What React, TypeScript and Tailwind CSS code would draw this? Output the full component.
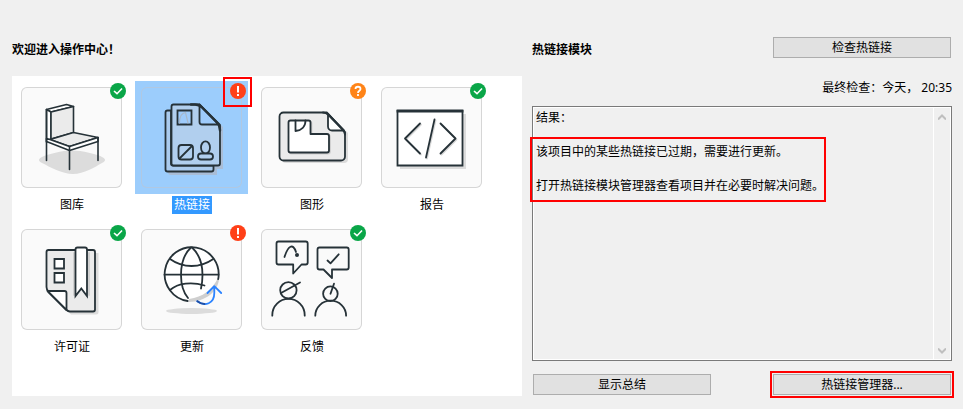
import type { ReactNode } from 'react'
import { useState } from 'react'

type Status = 'ok' | 'error' | 'question'

interface Module {
  id: string
  label: string
  status: Status
  icon: ReactNode
}

const INK = '#263238'

// All tile drawings share a 101 x 101 canvas, the size of the card.
const Drawing = ({ children }: { children: ReactNode }) => (
  <svg
    viewBox="0 0 101 101"
    className="block size-full"
    fill="none"
    stroke={INK}
    strokeWidth="1.8"
    strokeLinecap="round"
    strokeLinejoin="round"
    aria-hidden="true"
  >
    {children}
  </svg>
)

const ChairIcon = () => (
  <Drawing>
    <path
      d="M21 70c6-3 20-6.500 30-6.500s25 3.500 30 6.500c4 2 4 4 0 6-7 4-18 11-29 11S29 80 21 76c-4-2-4-4 0-6Z"
      fill="#dcdcdc"
      stroke="none"
    />
    <g strokeWidth="1.6">
      <path d="M25.500 22.500 45.500 17.500 52.500 19.500 30 25Z" fill="#fff" />
      <path d="M25.500 22.500 30 25V52L25.500 55Z" fill="#fff" />
      <path d="M30 25 52.500 19.500V45.500L30 52Z" fill="#ebebeb" />
      <path d="M29 52.500 52.500 45.500 77 50.500 48.500 59.500Z" fill="#ebebeb" />
      <path d="M25.500 51.500V54.500L48.500 63.500 77 54.500V50.500L48.500 59.500 29 52.500Z" fill="#fff" />
      <path d="M25.500 22.500V73.500M48.500 59.500V82.500M77 50.500V73.500" />
    </g>
  </Drawing>
)

const HotlinkIcon = () => (
  <Drawing>
    <path d="M27 26H34V20H62L82 40V82H76V88H30a3 3 0 0 1-3-3Z" fill="#a9bdd6" stroke="none" />
    <path
      d="M30 23.500H26.500a2 2 0 0 0-2 2V82.500a2 2 0 0 0 2 2H70.500a2 2 0 0 0 2-2V78.500H32a2 2 0 0 1-2-2Z"
      fill="#aacbee"
    />
    <path
      d="M32.500 17.500H58.500L79 38V76.500a2 2 0 0 1-2 2H32.500a2 2 0 0 1-2-2V19.500a2 2 0 0 1 2-2Z"
      fill="#b1cfee"
    />
    <path d="M58.500 17.500V35a2.500 2.500 0 0 0 2.500 2.500H77.500Z" fill="#9ecbfb" />
    <path d="M50 17.500h4c3 0 5 1 7 3L76 35.500c2 2 3 4 3 8" strokeWidth="2.400" />
    <path d="M36.500 23.500H50.500V37.500H36.500Z" fill="#9ecbfb" strokeLinejoin="miter" />
    <path d="M38.500 36c0-6 2-10 6-10.500l2.500 10.500" stroke="#a8b8ca" strokeWidth="1.200" />
    <rect x="37.500" y="58" width="14.500" height="14.500" rx="3" />
    <path d="M38.500 71.500 51 59" />
    <ellipse cx="64.500" cy="60.500" rx="4.500" ry="6.200" />
    <rect x="57" y="66.500" width="15" height="6" rx="3" fill="#b1cfee" />
  </Drawing>
)

const ShapeIcon = () => (
  <Drawing>
    <path d="M21 30H70L87 46V72a4 4 0 0 1-4 4H25a4 4 0 0 1-4-4Z" fill="#dcdcdc" stroke="none" />
    <path
      d="M22.500 25.500H66L84 45V69.500a4 4 0 0 1-4 4H22.500a4 4 0 0 1-4-4V29.500a4 4 0 0 1 4-4Z"
      fill="#ebebeb"
    />
    <path d="M67 27V39.500a4 4 0 0 0 4 4H83Z" fill="#fff" />
    <path d="M62 25.500c3 0 4 1 5.500 2.500L81.500 42.500c1.500 1.500 2.500 3 2.500 5" />
    <path
      d="M29.500 33.500H47.500a2 2 0 0 1 2 2V47H66a2 2 0 0 1 2 2V63.500a2 2 0 0 1-2 2H29.500a2 2 0 0 1-2-2V35.500a2 2 0 0 1 2-2Z"
      stroke="#cfcfcf"
      transform="translate(1 1)"
    />
    <path
      d="M29.500 33.500H47.500a2 2 0 0 1 2 2V47H66a2 2 0 0 1 2 2V63.500a2 2 0 0 1-2 2H29.500a2 2 0 0 1-2-2V35.500a2 2 0 0 1 2-2Z"
      fill="#fff"
    />
    <path d="M34.500 33.500V44C40.500 43.500 44.500 39.500 44.500 33.500" />
  </Drawing>
)

const ReportIcon = () => (
  <Drawing>
    <path d="M19 27H85V82H19Z" fill="#dcdcdc" stroke="none" />
    <g strokeLinejoin="miter">
      <path d="M16.500 24H81.500V78.500H16.500Z" fill="#fff" />
      <path d="M15.600 24H82.400" strokeWidth="2.800" strokeLinecap="butt" />
    </g>
    <path
      d="M39 36.500 24 51.500 39 66.500M59.500 36.500 74.500 51.500 59.500 66.500M53.500 32.500 45 70.500"
      stroke="#d8d8d8"
      transform="translate(1 1)"
    />
    <path d="M39 36.500 24 51.500 39 66.500M59.500 36.500 74.500 51.500 59.500 66.500M53.500 32.500 45 70.500" />
  </Drawing>
)

const LicenseIcon = () => (
  <Drawing>
    <path d="M28 24H77.500V83a2.500 2.500 0 0 1-2.500 2.500H50L28 64Z" fill="#dcdcdc" stroke="none" />
    <path
      d="M27.500 21H72a2 2 0 0 1 2 2V80.500a2 2 0 0 1-2 2H49c-2 0-3-1-4-2L27.500 63c-1.500-2-2-3-2-5V23a2 2 0 0 1 2-2Z"
      fill="#ebebeb"
    />
    <path d="M26.500 62H43.500a2 2 0 0 1 2 2V81Z" fill="#fff" />
    <path
      d="M33.500 30H43V39.500H33.500ZM33.500 44H43V53.500H33.500Z"
      fill="#fff"
      strokeLinejoin="miter"
    />
    <path d="M53 24V66M68 24V66" stroke="#cfcfcf" />
    <path
      d="M54.500 20.500a2 2 0 0 1 2-2h7.500a2 2 0 0 1 2 2V67L60.300 59.500 54.500 67Z"
      fill="#fff"
      strokeLinejoin="miter"
    />
  </Drawing>
)

const UpdateIcon = () => (
  <Drawing>
    <ellipse cx="50.500" cy="82" rx="25.500" ry="3" fill="#dcdcdc" stroke="none" />
    <circle cx="50.500" cy="45.500" r="27" fill="#fff" stroke="none" />
    <path d="M77 49C71 61 62 68 48 70V73C64 73 78 62 78 49Z" fill="#cfcfcf" stroke="none" />
    <path d="M77.200 50.200A27 27 0 1 0 46.700 72" />
    <path d="M23.500 45.700H77.500" />
    <path d="M29 30c13 9.300 30 9.300 43.300 0M29 61c8-7 22-8.500 34.500-4.500" />
    <path d="M50 18.500C44 24 40 34 40 46C40 55 42 63 47 69" />
    <path d="M51 18.500C57 24 61.500 34 61.500 46C61.500 51 61 55 60 59.500" />
    <path d="M56.300 72.300C64 78 73.300 74.500 73.300 64V57.500M66.500 64 73.300 57.200 80.200 64" stroke="#2b83ff" />
    <path d="M56.300 72.300C58.500 74 61 75 63.500 75" stroke="#1f4fa5" />
  </Drawing>
)

const FeedbackIcon = () => (
  <Drawing>
    <path d="M17.500 12.500H44.700a2 2 0 0 1 2 2V33.500a2 2 0 0 1-2 2H40.500L32.200 44.500V35.500H17.500a2 2 0 0 1-2-2V14.500a2 2 0 0 1 2-2Z" />
    <path d="M23.500 28C27 17 32 13.500 35 23" />
    <circle cx="36" cy="26" r="2" fill={INK} stroke="none" />
    <path d="M58.500 18.500H85.700a2 2 0 0 1 2 2V38.500a2 2 0 0 1-2 2H71V49L62.500 40.500H58.500a2 2 0 0 1-2-2V20.500a2 2 0 0 1 2-2Z" />
    <path d="M66.500 31.500 69.500 34.300 77.700 25.300" />
    <circle cx="27.400" cy="61.300" r="8.200" />
    <path d="M20.500 63.700 39 53.500M11.300 86.700V86a16.200 16.200 0 0 1 32.400 0V86.700" />
    <circle cx="69.400" cy="64.700" r="7.300" />
    <path d="M69.500 64.700 73 54.700M54.300 86.700a15.400 15 0 0 1 30.800 0" />
  </Drawing>
)

const badgeFill: Record<Status, string> = {
  ok: '#0aa648',
  error: '#ff4018',
  question: '#ff8418',
}

const StatusBadge = ({ status }: { status: Status }) => (
  <svg
    viewBox="0 0 16 16"
    className="absolute top-[2px] right-[2px] size-4"
    fill="none"
    stroke="#fff"
    strokeWidth="2"
    aria-hidden="true"
  >
    <circle cx="8" cy="8" r="8" fill={badgeFill[status]} stroke="none" />
    {status === 'ok' && <path d="M4 8 7 10.700 12 5.500" strokeWidth="1.600" />}
    {status === 'error' && <path d="M8 3V9.500M8 11V13" />}
    {status === 'question' && (
      <path d="M5.500 6C5.500 3 10.500 3 10.500 6C10.500 8 8 7.500 8 10M8 11V13" strokeWidth="1.800" />
    )}
  </svg>
)

const modules: Module[] = [
  { id: 'library', label: '图库', status: 'ok', icon: <ChairIcon /> },
  { id: 'hotlink', label: '热链接', status: 'error', icon: <HotlinkIcon /> },
  { id: 'shape', label: '图形', status: 'question', icon: <ShapeIcon /> },
  { id: 'report', label: '报告', status: 'ok', icon: <ReportIcon /> },
  { id: 'license', label: '许可证', status: 'ok', icon: <LicenseIcon /> },
  { id: 'update', label: '更新', status: 'error', icon: <UpdateIcon /> },
  { id: 'feedback', label: '反馈', status: 'ok', icon: <FeedbackIcon /> },
]

const message = [
  '结果：',
  '',
  '该项目中的某些热链接已过期，需要进行更新。',
  '',
  '打开热链接模块管理器查看项目并在必要时解决问题。',
].join('\n')

interface TileProps {
  module: Module
  selected: boolean
  onSelect: () => void
}

const ModuleTile = ({ module, selected, onSelect }: TileProps) => (
  <button
    type="button"
    aria-pressed={selected}
    onClick={onSelect}
    className="relative flex h-[142px] w-[120px] flex-col items-center px-[3px]"
  >
    <span
      className={`relative block size-[113px] self-start p-[6px] ${selected ? 'bg-[#9ccdfc]' : ''}`}
    >
      <span
        className={`relative block size-[101px] rounded-md ${
          selected
            ? 'inset-ring inset-ring-[#b0c8e2]'
            : 'bg-[#fafafa] inset-ring inset-ring-[#d6d6d6]'
        }`}
      >
        {module.icon}
      </span>
      <StatusBadge status={module.status} />
    </span>
    <span
      className={`mt-[2px] px-[2px] leading-[18px] ${selected ? 'bg-[#3399ff] text-white' : ''}`}
    >
      {module.label}
    </span>
    {module.id === 'hotlink' && (
      <span className="absolute -top-1 right-0 h-[30px] w-[29px] border-2 border-[#f00]" />
    )}
  </button>
)

const PushButton = ({ children }: { children: ReactNode }) => (
  <button
    type="button"
    className="h-[21px] w-[178px] border border-[#adadad] bg-[#e1e1e1] leading-[18px] hover:border-[#0078d7] hover:bg-[#e5f1fb]"
  >
    {children}
  </button>
)

const ScrollArrow = ({ label, d }: { label: string; d: string }) => (
  <button type="button" aria-label={label} className="flex h-[17px] items-center justify-center">
    <svg viewBox="0 0 8 6" className="h-[6px] w-2" fill="none" stroke="#bfbfbf" strokeWidth="2">
      <path d={d} />
    </svg>
  </button>
)

const App = () => {
  const [selectedId, setSelectedId] = useState('hotlink')

  return (
    <div className="min-h-screen bg-[#f0f0f0] pt-[37px] pr-[11px] pb-3 pl-3 font-['Noto_Sans','Noto_Sans_CJK_SC',sans-serif] text-xs text-black">
      <main className="flex gap-[10px]">
        <section className="flex min-w-0 flex-[51] flex-col">
          <h1 className="pt-1 leading-[18px] font-bold">欢迎进入操作中心！</h1>
          <div className="mt-[17px] flex min-h-[320px] flex-1 flex-wrap content-start bg-white pt-[5px]">
            {modules.map((module) => (
              <ModuleTile
                key={module.id}
                module={module}
                selected={module.id === selectedId}
                onSelect={() => setSelectedId(module.id)}
              />
            ))}
          </div>
        </section>

        <section className="flex min-w-0 flex-[42] flex-col pb-px">
          <div className="flex h-[21px] items-start justify-between pr-px">
            <h2 className="pt-1 leading-[18px] font-bold">热链接模块</h2>
            <PushButton>检查热链接</PushButton>
          </div>
          <p className="mt-[21px] text-right leading-[18px]">最终检查：今天， 20:35</p>

          {/* RESULT */}
          <div className="relative mt-[9px] flex flex-1 border border-[#7a7a7a]">
            <textarea
              readOnly
              aria-label="结果"
              value={message}
              className="min-w-0 flex-1 resize-none overflow-hidden border border-white px-[2px] py-[1px] leading-[17px] outline-none"
            />
            <div className="flex w-[17px] flex-col justify-between border-y border-r border-white">
              <ScrollArrow label="向上滚动" d="M0 5.500 4 1.500 8 5.500" />
              <ScrollArrow label="向下滚动" d="M0 .5 4 4.500 8 .5" />
            </div>
            <span className="pointer-events-none absolute top-[30px] -left-[3px] h-[65px] w-[296px] border-2 border-[#f00]" />
          </div>

          <div className="mt-[13px] flex justify-between px-px">
            <PushButton>显示总结</PushButton>
            <div className="relative flex">
              <PushButton>热链接管理器...</PushButton>
              <span className="pointer-events-none absolute -inset-[3px] border-2 border-[#f00]" />
            </div>
          </div>
        </section>
      </main>
    </div>
  )
}

export default App
